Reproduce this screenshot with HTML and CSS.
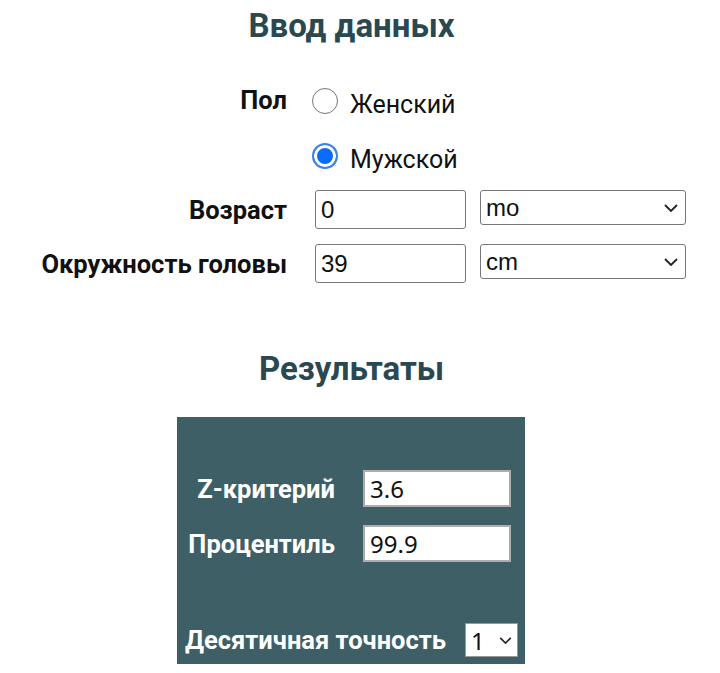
FILE: index.html
```html
<!DOCTYPE html>
<html lang="ru">
<head>
    <meta charset="UTF-8">
    <meta name="viewport" content="width=device-width, initial-scale=1.0">
    <title>Окружность головы</title>
    <link rel="stylesheet" href="styles.css">
</head>
<body>
    <div class="page">
        <h2 class="section-title">Ввод данных</h2>

        <div class="form">
            <div class="label label-top">Пол</div>
            <div class="radios">
                <label class="radio-row">
                    <input type="radio" name="sex" value="f">
                    <span>Женский</span>
                </label>
                <label class="radio-row">
                    <input type="radio" name="sex" value="m" checked>
                    <span>Мужской</span>
                </label>
            </div>

            <div class="label">Возраст</div>
            <input class="field" type="text" value="0">
            <div class="select-wrap">
                <select class="unit">
                    <option>mo</option>
                    <option>yr</option>
                </select>
                <svg class="chevron" viewBox="0 0 14 8" width="14" height="8"><path d="M1 1l6 6 6-6" fill="none" stroke="#222" stroke-width="1.8"/></svg>
            </div>

            <div class="label">Окружность головы</div>
            <input class="field" type="text" value="39">
            <div class="select-wrap">
                <select class="unit">
                    <option>cm</option>
                    <option>in</option>
                </select>
                <svg class="chevron" viewBox="0 0 14 8" width="14" height="8"><path d="M1 1l6 6 6-6" fill="none" stroke="#222" stroke-width="1.8"/></svg>
            </div>
        </div>

        <h2 class="section-title results-title">Результаты</h2>

        <div class="results">
            <div class="result-grid">
                <div class="result-label">Z-критерий</div>
                <input class="result-field" type="text" value="3.6" readonly>
                <div class="result-label">Процентиль</div>
                <input class="result-field" type="text" value="99.9" readonly>
            </div>

            <div class="precision">
                <span class="result-label">Десятичная точность</span>
                <div class="select-wrap small">
                    <select class="digits">
                        <option>1</option>
                        <option>2</option>
                    </select>
                    <svg class="chevron" viewBox="0 0 14 8" width="13" height="7"><path d="M1 1l6 6 6-6" fill="none" stroke="#222" stroke-width="1.8"/></svg>
                </div>
            </div>
        </div>
    </div>
</body>
</html>
```

FILE: styles.css
```css
body {
    margin: 0;
    padding: 0;
    background: #fff;
    color: #111;
    font-family: Roboto, "Noto Sans", sans-serif;
}

.page {
    width: 703px;
}

.section-title {
    margin: 6px 0 0;
    font-size: 33px;
    line-height: 40px;
    font-weight: 700;
    color: #2a4850;
    text-align: center;
}

.form {
    display: grid;
    grid-template-columns: 301px 151px 206px;
    column-gap: 14px;
    row-gap: 15px;
    align-items: center;
    margin-top: 44px;
}

.label {
    font-size: 25.5px;
    line-height: 30px;
    font-weight: 700;
    text-align: right;
    padding-right: 14px;
}

.label-top {
    align-self: start;
    margin-top: -5px;
}

.radios {
    grid-column: 2 / 4;
    display: flex;
    flex-direction: column;
    gap: 25px;
}

.radio-row {
    display: flex;
    align-items: flex-start;
    gap: 12px;
    font-size: 25px;
    line-height: 30px;
}

.radio-row input {
    appearance: none;
    box-sizing: border-box;
    flex: none;
    margin: -2px 0 0 -3px;
    width: 26px;
    height: 26px;
    border: 1.5px solid #777;
    border-radius: 50%;
    background: #fff;
}

.radio-row input:checked {
    border: 2px solid #3b82f0;
    background: #0a6cff;
    box-shadow: inset 0 0 0 3px #fff;
}

.field {
    box-sizing: border-box;
    width: 151px;
    height: 39px;
    margin: 0;
    padding: 0 5px;
    border: 1.5px solid #777;
    border-radius: 3px;
    font-family: "Liberation Sans", Arial, sans-serif;
    font-size: 24px;
    color: #111;
}

.select-wrap {
    position: relative;
    align-self: start;
}

.unit {
    appearance: none;
    box-sizing: border-box;
    width: 206px;
    height: 35px;
    margin: 0;
    padding: 0 5px;
    border: 1.5px solid #777;
    border-radius: 3px;
    background: #fff;
    font-family: "Liberation Sans", Arial, sans-serif;
    font-size: 24px;
    color: #111;
}

.chevron {
    position: absolute;
    right: 8px;
    top: 14px;
    pointer-events: none;
}

.results-title {
    margin-top: 66px;
}

.results {
    box-sizing: border-box;
    width: 348px;
    margin: 28px 0 0 177px;
    padding: 53px 7px 7px 8px;
    background: #3e5f66;
}

.result-grid {
    display: grid;
    grid-template-columns: 150px 148px;
    column-gap: 28px;
    row-gap: 18px;
    align-items: center;
}

.result-label {
    font-size: 25.5px;
    line-height: 30px;
    font-weight: 700;
    color: #fff;
    text-align: right;
}

.result-field {
    box-sizing: border-box;
    width: 148px;
    height: 37px;
    margin: 0;
    padding: 0 5px;
    border: 2px solid #adadad;
    font-family: "Noto Sans", sans-serif;
    font-size: 24px;
    color: #111;
    background: #fff;
}

.precision {
    display: flex;
    align-items: center;
    justify-content: space-between;
    margin-top: 61px;
}

.select-wrap.small {
    align-self: auto;
}

.digits {
    appearance: none;
    box-sizing: border-box;
    width: 53px;
    height: 34px;
    margin: 0;
    padding: 0 5px;
    border: 1.5px solid #999;
    background: #fff;
    font-family: "Noto Sans", sans-serif;
    font-size: 24px;
    color: #111;
}

.small .chevron {
    top: 14px;
    right: 6px;
}
```
